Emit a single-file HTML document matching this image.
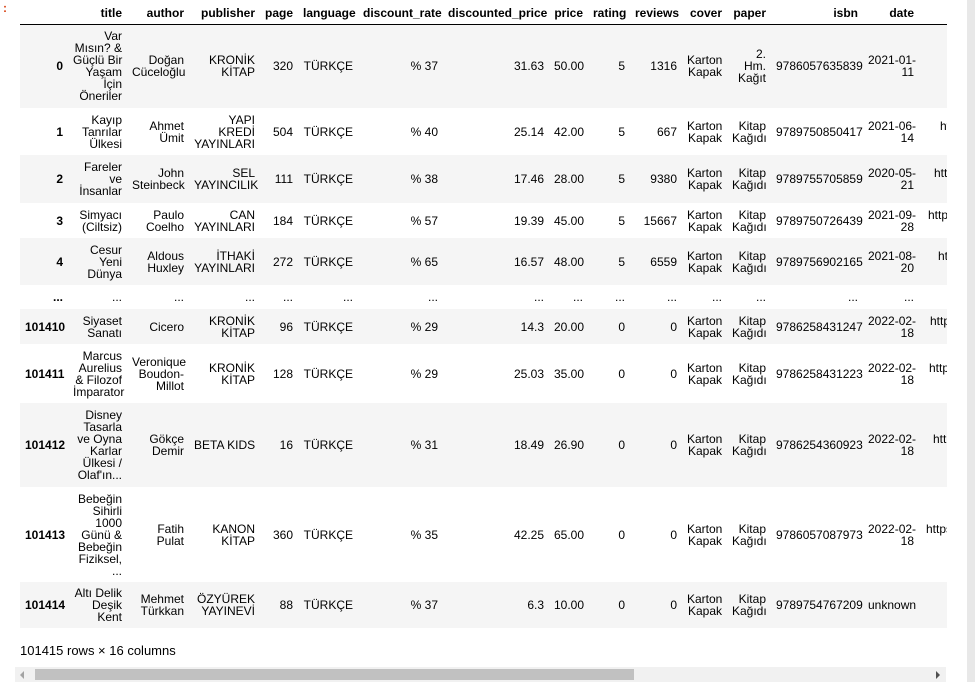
<!DOCTYPE html>
<html><head><meta charset="utf-8">
<style>
html,body{margin:0;padding:0;background:#fff;width:975px;height:682px;overflow:hidden;font-family:"Liberation Sans",Arial,sans-serif;font-size:12px;color:#000;position:relative}
.prompt{position:absolute;left:3px;top:1px;color:#d84315;font-weight:bold;font-size:12px}
.wrap{position:absolute;left:20px;top:0;width:927px;height:632px;overflow:hidden}
table{border-collapse:collapse;table-layout:fixed;width:1000px}
td,th{padding:0 5px;text-align:right;vertical-align:middle;line-height:12px;white-space:nowrap;overflow:hidden}
th{font-weight:bold}
thead tr{height:24px;border-bottom:1px solid #000}
thead th{vertical-align:middle;padding-top:2px}
tbody tr:nth-child(odd){background:#f5f5f5}
tbody th{font-weight:bold}
td.u{text-align:left;padding-left:var(--p)}
.cap{position:absolute;left:20px;top:643px;font-size:13px;line-height:15px}
.sb{position:absolute;left:15px;top:667px;width:931px;height:15px;background:#f1f1f1}
.thumb{position:absolute;left:20px;top:2px;width:599px;height:11px;background:#c1c1c1}
.al{position:absolute;left:5px;top:4px;width:0;height:0;border-top:4px solid transparent;border-bottom:4px solid transparent;border-right:4px solid #a3a3a3}
.ar{position:absolute;right:6px;top:4px;width:0;height:0;border-top:4px solid transparent;border-bottom:4px solid transparent;border-left:4px solid #505050}
.vs{position:absolute;left:967px;top:0;width:8px;height:682px;background:#e8e8e8}
</style></head><body>
<div class="prompt">:</div>
<div class="vs"></div>
<div class="wrap">
<table>
<colgroup>
<col style="width:48px"><col style="width:59px"><col style="width:62px"><col style="width:71px"><col style="width:38px"><col style="width:60px"><col style="width:85px"><col style="width:106px"><col style="width:39px"><col style="width:42px"><col style="width:52px"><col style="width:45px"><col style="width:44px"><col style="width:92px"><col style="width:56px"><col style="width:101px">
</colgroup>
<thead><tr><th></th><th>title</th><th>author</th><th>publisher</th><th>page</th><th>language</th><th>discount_rate</th><th>discounted_price</th><th>price</th><th>rating</th><th>reviews</th><th>cover</th><th>paper</th><th>isbn</th><th>date</th><th></th></tr></thead>
<tbody>
<tr style="height:84px"><th>0</th><td>Var<br>Mısın? &amp;<br>Güçlü Bir<br>Yaşam<br>İçin<br>Öneriler</td><td>Doğan<br>Cüceloğlu</td><td>KRONİK<br>KİTAP</td><td>320</td><td>TÜRKÇE</td><td>% 37</td><td>31.63</td><td>50.00</td><td>5</td><td>1316</td><td>Karton<br>Kapak</td><td>2.<br>Hm.<br>Kağıt</td><td>9786057635839</td><td>2021-01-<br>11</td><td></td></tr>
<tr style="height:47px"><th>1</th><td>Kayıp<br>Tanrılar<br>Ülkesi</td><td>Ahmet<br>Ümit</td><td>YAPI<br>KREDİ<br>YAYINLARI</td><td>504</td><td>TÜRKÇE</td><td>% 40</td><td>25.14</td><td>42.00</td><td>5</td><td>667</td><td>Karton<br>Kapak</td><td>Kitap<br>Kağıdı</td><td>9789750850417</td><td>2021-06-<br>14</td><td class="u" style="--p:21px">https://<br>&nbsp;</td></tr>
<tr style="height:48px"><th>2</th><td>Fareler<br>ve<br>İnsanlar</td><td>John<br>Steinbeck</td><td>SEL<br>YAYINCILIK</td><td>111</td><td>TÜRKÇE</td><td>% 38</td><td>17.46</td><td>28.00</td><td>5</td><td>9380</td><td>Karton<br>Kapak</td><td>Kitap<br>Kağıdı</td><td>9789755705859</td><td>2020-05-<br>21</td><td class="u" style="--p:15px">https://<br>&nbsp;</td></tr>
<tr style="height:35px"><th>3</th><td>Simyacı<br>(Ciltsiz)</td><td>Paulo<br>Coelho</td><td>CAN<br>YAYINLARI</td><td>184</td><td>TÜRKÇE</td><td>% 57</td><td>19.39</td><td>45.00</td><td>5</td><td>15667</td><td>Karton<br>Kapak</td><td>Kitap<br>Kağıdı</td><td>9789750726439</td><td>2021-09-<br>28</td><td class="u" style="--p:9px">https://<br>&nbsp;</td></tr>
<tr style="height:47px"><th>4</th><td>Cesur<br>Yeni<br>Dünya</td><td>Aldous<br>Huxley</td><td>İTHAKİ<br>YAYINLARI</td><td>272</td><td>TÜRKÇE</td><td>% 65</td><td>16.57</td><td>48.00</td><td>5</td><td>6559</td><td>Karton<br>Kapak</td><td>Kitap<br>Kağıdı</td><td>9789756902165</td><td>2021-08-<br>20</td><td class="u" style="--p:19px">https://<br>&nbsp;</td></tr>
<tr style="height:24px;background:#fff"><th>...</th><td>...</td><td>...</td><td>...</td><td>...</td><td>...</td><td>...</td><td>...</td><td>...</td><td>...</td><td>...</td><td>...</td><td>...</td><td>...</td><td>...</td><td></td></tr>
<tr style="height:35px;background:#f5f5f5"><th>101410</th><td>Siyaset<br>Sanatı</td><td>Cicero</td><td>KRONİK<br>KİTAP</td><td>96</td><td>TÜRKÇE</td><td>% 29</td><td>14.3</td><td>20.00</td><td>0</td><td>0</td><td>Karton<br>Kapak</td><td>Kitap<br>Kağıdı</td><td>9786258431247</td><td>2022-02-<br>18</td><td class="u" style="--p:11px">https://<br>&nbsp;</td></tr>
<tr style="height:59px;background:#fff"><th>101411</th><td>Marcus<br>Aurelius<br>&amp; Filozof<br>İmparator</td><td>Veronique<br>Boudon-<br>Millot</td><td>KRONİK<br>KİTAP</td><td>128</td><td>TÜRKÇE</td><td>% 29</td><td>25.03</td><td>35.00</td><td>0</td><td>0</td><td>Karton<br>Kapak</td><td>Kitap<br>Kağıdı</td><td>9786258431223</td><td>2022-02-<br>18</td><td class="u" style="--p:10px">https://<br>&nbsp;</td></tr>
<tr style="height:84px;background:#f5f5f5"><th>101412</th><td>Disney<br>Tasarla<br>ve Oyna<br>Karlar<br>Ülkesi /<br>Olaf'ın...</td><td>Gökçe<br>Demir</td><td>BETA KIDS</td><td>16</td><td>TÜRKÇE</td><td>% 31</td><td>18.49</td><td>26.90</td><td>0</td><td>0</td><td>Karton<br>Kapak</td><td>Kitap<br>Kağıdı</td><td>9786254360923</td><td>2022-02-<br>18</td><td class="u" style="--p:14px">https://<br>&nbsp;</td></tr>
<tr style="height:95px;background:#fff"><th>101413</th><td>Bebeğin<br>Sihirli<br>1000<br>Günü &amp;<br>Bebeğin<br>Fiziksel,<br>...</td><td>Fatih<br>Pulat</td><td>KANON<br>KİTAP</td><td>360</td><td>TÜRKÇE</td><td>% 35</td><td>42.25</td><td>65.00</td><td>0</td><td>0</td><td>Karton<br>Kapak</td><td>Kitap<br>Kağıdı</td><td>9786057087973</td><td>2022-02-<br>18</td><td class="u" style="--p:7px">https://<br>&nbsp;</td></tr>
<tr style="height:46px;background:#f5f5f5"><th>101414</th><td>Altı Delik<br>Deşik<br>Kent</td><td>Mehmet<br>Türkkan</td><td>ÖZYÜREK<br>YAYINEVİ</td><td>88</td><td>TÜRKÇE</td><td>% 37</td><td>6.3</td><td>10.00</td><td>0</td><td>0</td><td>Karton<br>Kapak</td><td>Kitap<br>Kağıdı</td><td>9789754767209</td><td>unknown</td><td></td></tr>
</tbody>
</table>
</div>
<div class="cap">101415 rows × 16 columns</div>
<div class="sb"><div class="al"></div><div class="thumb"></div><div class="ar"></div></div>
</body></html>
